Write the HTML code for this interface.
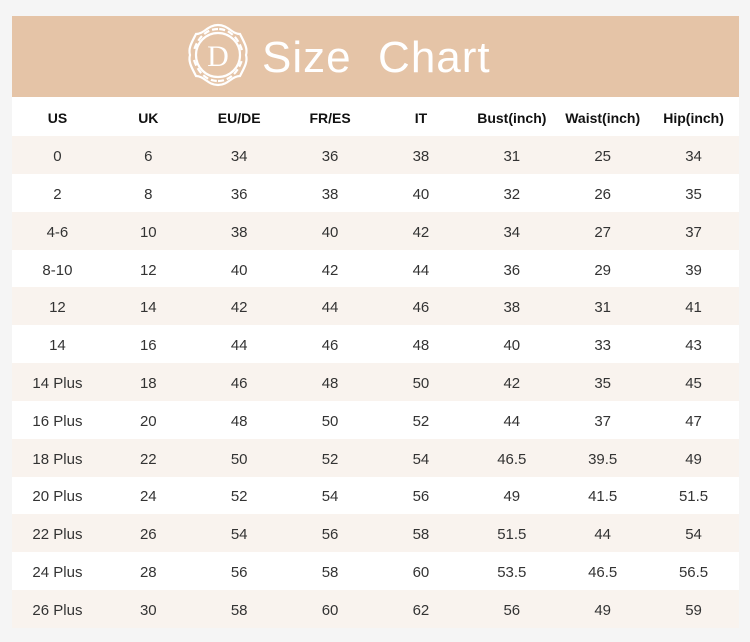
<!DOCTYPE html>
<html><head><meta charset="utf-8"><style>
html,body{margin:0;padding:0}
body{width:750px;height:642px;background:#f5f5f5;position:relative;overflow:hidden;font-family:"Liberation Sans",sans-serif}
#t{position:absolute;left:12px;top:16px;width:727px;height:611px;background:#fff}
#hd{position:absolute;left:0;top:0;width:727px;height:81px;background:#e5c4a7}
#title{position:absolute;left:250px;top:17px;color:#fff;font-size:44px;white-space:pre;letter-spacing:1px}
.row{position:absolute;left:0;width:727px;height:38px;display:flex;font-size:15px;color:#333}
.row div{width:90.9px;text-align:center;line-height:42px}
.tint{background:#f9f3ee}
.h{font-weight:bold;color:#111;font-size:14px}
</style></head><body>
<div id="t">
<div id="hd">
<svg style="position:absolute;left:172px;top:4px" width="68" height="70" viewBox="0 0 68 70" fill="none" stroke="#fff" stroke-width="2.2">
<circle cx="34" cy="35" r="22"/>
<path d="M34 5 C44 5 48 14 56 14 C60 22 64 28 62 35 C64 42 60 48 56 56 C48 56 44 65 34 65 C24 65 20 56 12 56 C8 48 4 42 6 35 C4 28 8 22 12 14 C20 14 24 5 34 5Z"/>
<path d="M34 9 C22 9 14 18 10 30 M58 30 C54 18 46 9 34 9 M10 40 C14 52 22 61 34 61 M34 61 C46 61 54 52 58 40" stroke-dasharray="6 3"/>
<text x="34" y="46" text-anchor="middle" fill="#fff" stroke="none" font-family="Liberation Serif,serif" font-size="30">D</text>
</svg>
<div id="title">Size  Chart</div>
</div>
<div class="row h" style="top:81px"><div>US</div><div>UK</div><div>EU/DE</div><div>FR/ES</div><div>IT</div><div>Bust(inch)</div><div>Waist(inch)</div><div>Hip(inch)</div></div>
<div class="row tint" style="top:120px"><div>0</div><div>6</div><div>34</div><div>36</div><div>38</div><div>31</div><div>25</div><div>34</div></div>
<div class="row" style="top:158px"><div>2</div><div>8</div><div>36</div><div>38</div><div>40</div><div>32</div><div>26</div><div>35</div></div>
<div class="row tint" style="top:196px"><div>4-6</div><div>10</div><div>38</div><div>40</div><div>42</div><div>34</div><div>27</div><div>37</div></div>
<div class="row" style="top:234px"><div>8-10</div><div>12</div><div>40</div><div>42</div><div>44</div><div>36</div><div>29</div><div>39</div></div>
<div class="row tint" style="top:271px"><div>12</div><div>14</div><div>42</div><div>44</div><div>46</div><div>38</div><div>31</div><div>41</div></div>
<div class="row" style="top:309px"><div>14</div><div>16</div><div>44</div><div>46</div><div>48</div><div>40</div><div>33</div><div>43</div></div>
<div class="row tint" style="top:347px"><div>14 Plus</div><div>18</div><div>46</div><div>48</div><div>50</div><div>42</div><div>35</div><div>45</div></div>
<div class="row" style="top:385px"><div>16 Plus</div><div>20</div><div>48</div><div>50</div><div>52</div><div>44</div><div>37</div><div>47</div></div>
<div class="row tint" style="top:423px"><div>18 Plus</div><div>22</div><div>50</div><div>52</div><div>54</div><div>46.5</div><div>39.5</div><div>49</div></div>
<div class="row" style="top:460px"><div>20 Plus</div><div>24</div><div>52</div><div>54</div><div>56</div><div>49</div><div>41.5</div><div>51.5</div></div>
<div class="row tint" style="top:498px"><div>22 Plus</div><div>26</div><div>54</div><div>56</div><div>58</div><div>51.5</div><div>44</div><div>54</div></div>
<div class="row" style="top:536px"><div>24 Plus</div><div>28</div><div>56</div><div>58</div><div>60</div><div>53.5</div><div>46.5</div><div>56.5</div></div>
<div class="row tint" style="top:574px"><div>26 Plus</div><div>30</div><div>58</div><div>60</div><div>62</div><div>56</div><div>49</div><div>59</div></div>
</div>
</body></html>
